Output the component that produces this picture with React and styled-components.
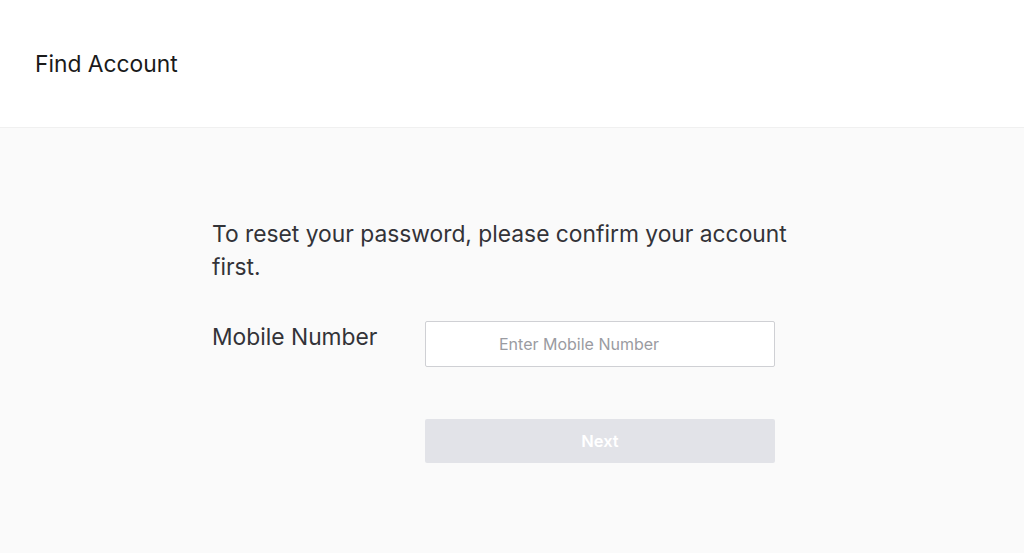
import React, { useState } from 'react';
import styled, { createGlobalStyle } from 'styled-components';

const GlobalStyle = createGlobalStyle`
  html, body {
    margin: 0;
    padding: 0;
    background: #fafafa;
    font-family: Inter, "Noto Sans", sans-serif;
  }
`;

const App = () => {
    const [mobile, setMobile] = useState('');

    return (
        <>
            <GlobalStyle />
            <Page>
                <Header>
                    <Title>Find Account</Title>
                </Header>
                <Main>
                    <Content>
                        <Intro>To reset your password, please confirm your account first.</Intro>
                        <FieldRow>
                            <Label>Mobile Number</Label>
                            <Input
                                type="tel"
                                placeholder="Enter Mobile Number"
                                value={mobile}
                                onChange={(e) => setMobile(e.target.value)}
                            />
                        </FieldRow>
                        <ButtonRow>
                            <NextButton disabled={mobile.length === 0}>Next</NextButton>
                        </ButtonRow>
                    </Content>
                </Main>
            </Page>
        </>
    );
};

export default App;

/* Styled Components */
const Page = styled.div`
  min-height: 553px;
  display: flex;
  flex-direction: column;
`;

const Header = styled.header`
  height: 128px;
  box-sizing: border-box;
  background: #ffffff;
  border-bottom: 1px solid #f0f0f0;
  padding: 50px 35px 0;
`;

const Title = styled.h1`
  margin: 0;
  font-size: 22.8px;
  font-weight: 400;
  color: #1a1a1a;
  line-height: 28px;
`;

const Main = styled.main`
  flex: 1;
  background: #fafafa;
  padding-top: 89px;
`;

const Content = styled.div`
  width: 600px;
  margin: 0 auto;
`;

const Intro = styled.p`
  margin: 0;
  font-size: 22.8px;
  line-height: 33px;
  color: #333338;
  max-width: 590px;
`;

const FieldRow = styled.div`
  display: flex;
  align-items: flex-start;
  margin-top: 38px;
`;

const Label = styled.label`
  width: 213px;
  flex-shrink: 0;
  font-size: 22.8px;
  line-height: 32px;
  color: #333338;
`;

const Input = styled.input`
  width: 350px;
  height: 46px;
  box-sizing: border-box;
  border: 1px solid #cfd0d4;
  border-radius: 2px;
  background: #ffffff;
  padding: 0 16px 0 73px;
  font-family: inherit;
  font-size: 16px;
  color: #333;
  outline: none;
  &::placeholder {
    color: #9a9ba1;
  }
`;

const ButtonRow = styled.div`
  display: flex;
  padding-left: 213px;
  margin-top: 52px;
`;

const NextButton = styled.button`
  width: 350px;
  height: 44px;
  border: none;
  border-radius: 2px;
  background: ${(p) => (p.disabled ? '#e2e3e8' : '#3a6df0')};
  color: #ffffff;
  font-family: inherit;
  font-size: 16.5px;
  font-weight: 600;
  cursor: ${(p) => (p.disabled ? 'default' : 'pointer')};
`;
